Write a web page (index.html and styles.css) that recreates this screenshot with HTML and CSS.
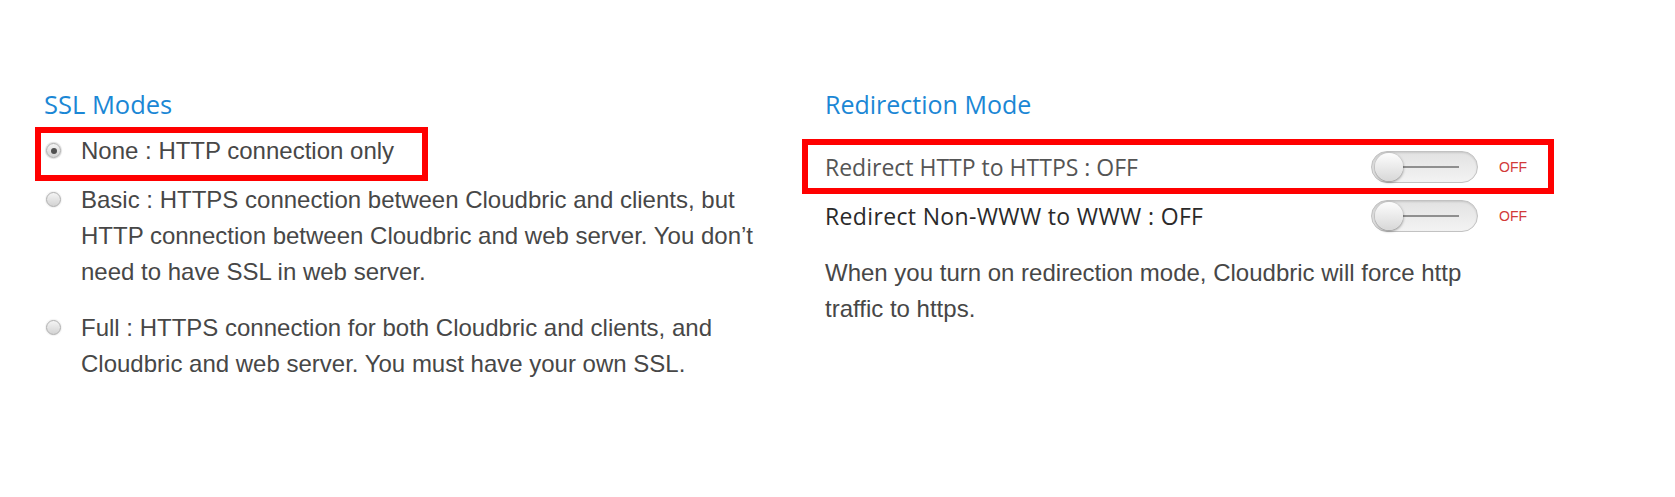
FILE: index.html
```html
<!DOCTYPE html>
<html lang="en">
<head>
    <meta charset="UTF-8">
    <title>SSL Settings - Cloudbric</title>
    <link rel="stylesheet" href="styles.css">
</head>
<body>
    <div class="page">
        <section class="col col-ssl">
            <h2 class="title">SSL Modes</h2>
            <ul class="modes">
                <li class="mode mode-active">
                    <span class="radio radio-on"></span>
                    <span class="mode-text">None : HTTP connection only</span>
                </li>
                <li class="mode">
                    <span class="radio"></span>
                    <span class="mode-text">Basic : HTTPS connection between Cloudbric and clients, but<br>HTTP connection between Cloudbric and web server. You don’t<br>need to have SSL in web server.</span>
                </li>
                <li class="mode">
                    <span class="radio"></span>
                    <span class="mode-text">Full : HTTPS connection for both Cloudbric and clients, and<br>Cloudbric and web server. You must have your own SSL.</span>
                </li>
            </ul>
        </section>

        <section class="col col-redirect">
            <h2 class="title">Redirection Mode</h2>
            <div class="switch-row switch-row-active">
                <span class="switch-label">Redirect HTTP to HTTPS : OFF</span>
                <span class="toggle"><span class="knob"></span></span>
                <span class="state">OFF</span>
            </div>
            <div class="switch-row">
                <span class="switch-label switch-label-dark">Redirect Non-WWW to WWW : OFF</span>
                <span class="toggle"><span class="knob"></span></span>
                <span class="state">OFF</span>
            </div>
            <p class="note">When you turn on redirection mode, Cloudbric will force http<br>traffic to https.</p>
        </section>
    </div>
</body>
</html>
```

FILE: styles.css
```css
body {
    margin: 0;
    background: #fff;
    font-family: "Liberation Sans", Arial, sans-serif;
    color: #474747;
}
.page {
    display: grid;
    grid-template-columns: 784px 1fr;
    padding: 87px 0 0 41px;
}
.title {
    font-family: "Open Sans", sans-serif;
    font-weight: 400;
    font-size: 25.5px;
    line-height: 34px;
    color: #1b87d5;
    margin: 0 0 12px 3px;
}
.col-redirect .title {
    margin: 0 0 24px;
    font-size: 25px;
}

/* ssl radio list */
.modes {
    list-style: none;
    margin: 0;
    padding: 0;
}
.mode {
    display: flex;
    align-items: flex-start;
    padding-left: 5px;
    font-size: 24px;
    line-height: 36px;
    margin-bottom: 20px;
}
.mode-active {
    outline: 6px solid #f00;
    width: 381px;
    height: 42px;
    box-sizing: border-box;
    margin-bottom: 7px;
}
.radio {
    position: relative;
    flex: none;
    width: 15px;
    height: 15px;
    margin: 10px 20px 0 0;
    border: 1px solid #aeaeae;
    border-radius: 50%;
    box-sizing: border-box;
    background: linear-gradient(#f4f4f4, #d3d3d3);
    box-shadow: 0 0 1px 1px rgba(0, 0, 0, .06);
}
.radio-on {
    box-shadow: 0 0 1px 1px rgba(0, 0, 0, .14);
}
.radio-on::after {
    content: "";
    position: absolute;
    top: 3.5px;
    left: 3.5px;
    width: 6px;
    height: 6px;
    border-radius: 50%;
    background: #505050;
}

/* redirect switches */
.switch-row {
    display: flex;
    align-items: center;
    width: 740px;
    height: 43px;
    margin: 0 0 6px -17px;
    padding: 0 21px 0 17px;
    box-sizing: border-box;
}
.switch-row-active {
    outline: 6px solid #f00;
}
.switch-label {
    flex: 1;
    font-family: "Open Sans", sans-serif;
    font-size: 23px;
    color: #555;
}
.switch-label-dark {
    color: #2a2a2a;
    letter-spacing: .35px;
}
.toggle {
    position: relative;
    flex: none;
    width: 107px;
    height: 32px;
    border: 1px solid #c2c2c2;
    border-radius: 16px;
    box-sizing: border-box;
    background: linear-gradient(#e2e2e2, #f3f3f3);
    box-shadow: inset 0 1px 2px rgba(0, 0, 0, .12);
}
.toggle::after {
    content: "";
    position: absolute;
    left: 31px;
    right: 18px;
    top: 14px;
    height: 2px;
    background: #8f8f8f;
}
.knob {
    position: absolute;
    left: 3px;
    top: 1px;
    width: 28px;
    height: 28px;
    border-radius: 50%;
    background: linear-gradient(#fdfdfd, #d8d8d8);
    box-shadow: 0 1px 3px rgba(0, 0, 0, .5);
    z-index: 1;
}
.state {
    margin-left: 21px;
    font-size: 14px;
    color: #d23a3a;
}
.note {
    margin: 18px 0 0;
    font-size: 24px;
    line-height: 36px;
}
```
